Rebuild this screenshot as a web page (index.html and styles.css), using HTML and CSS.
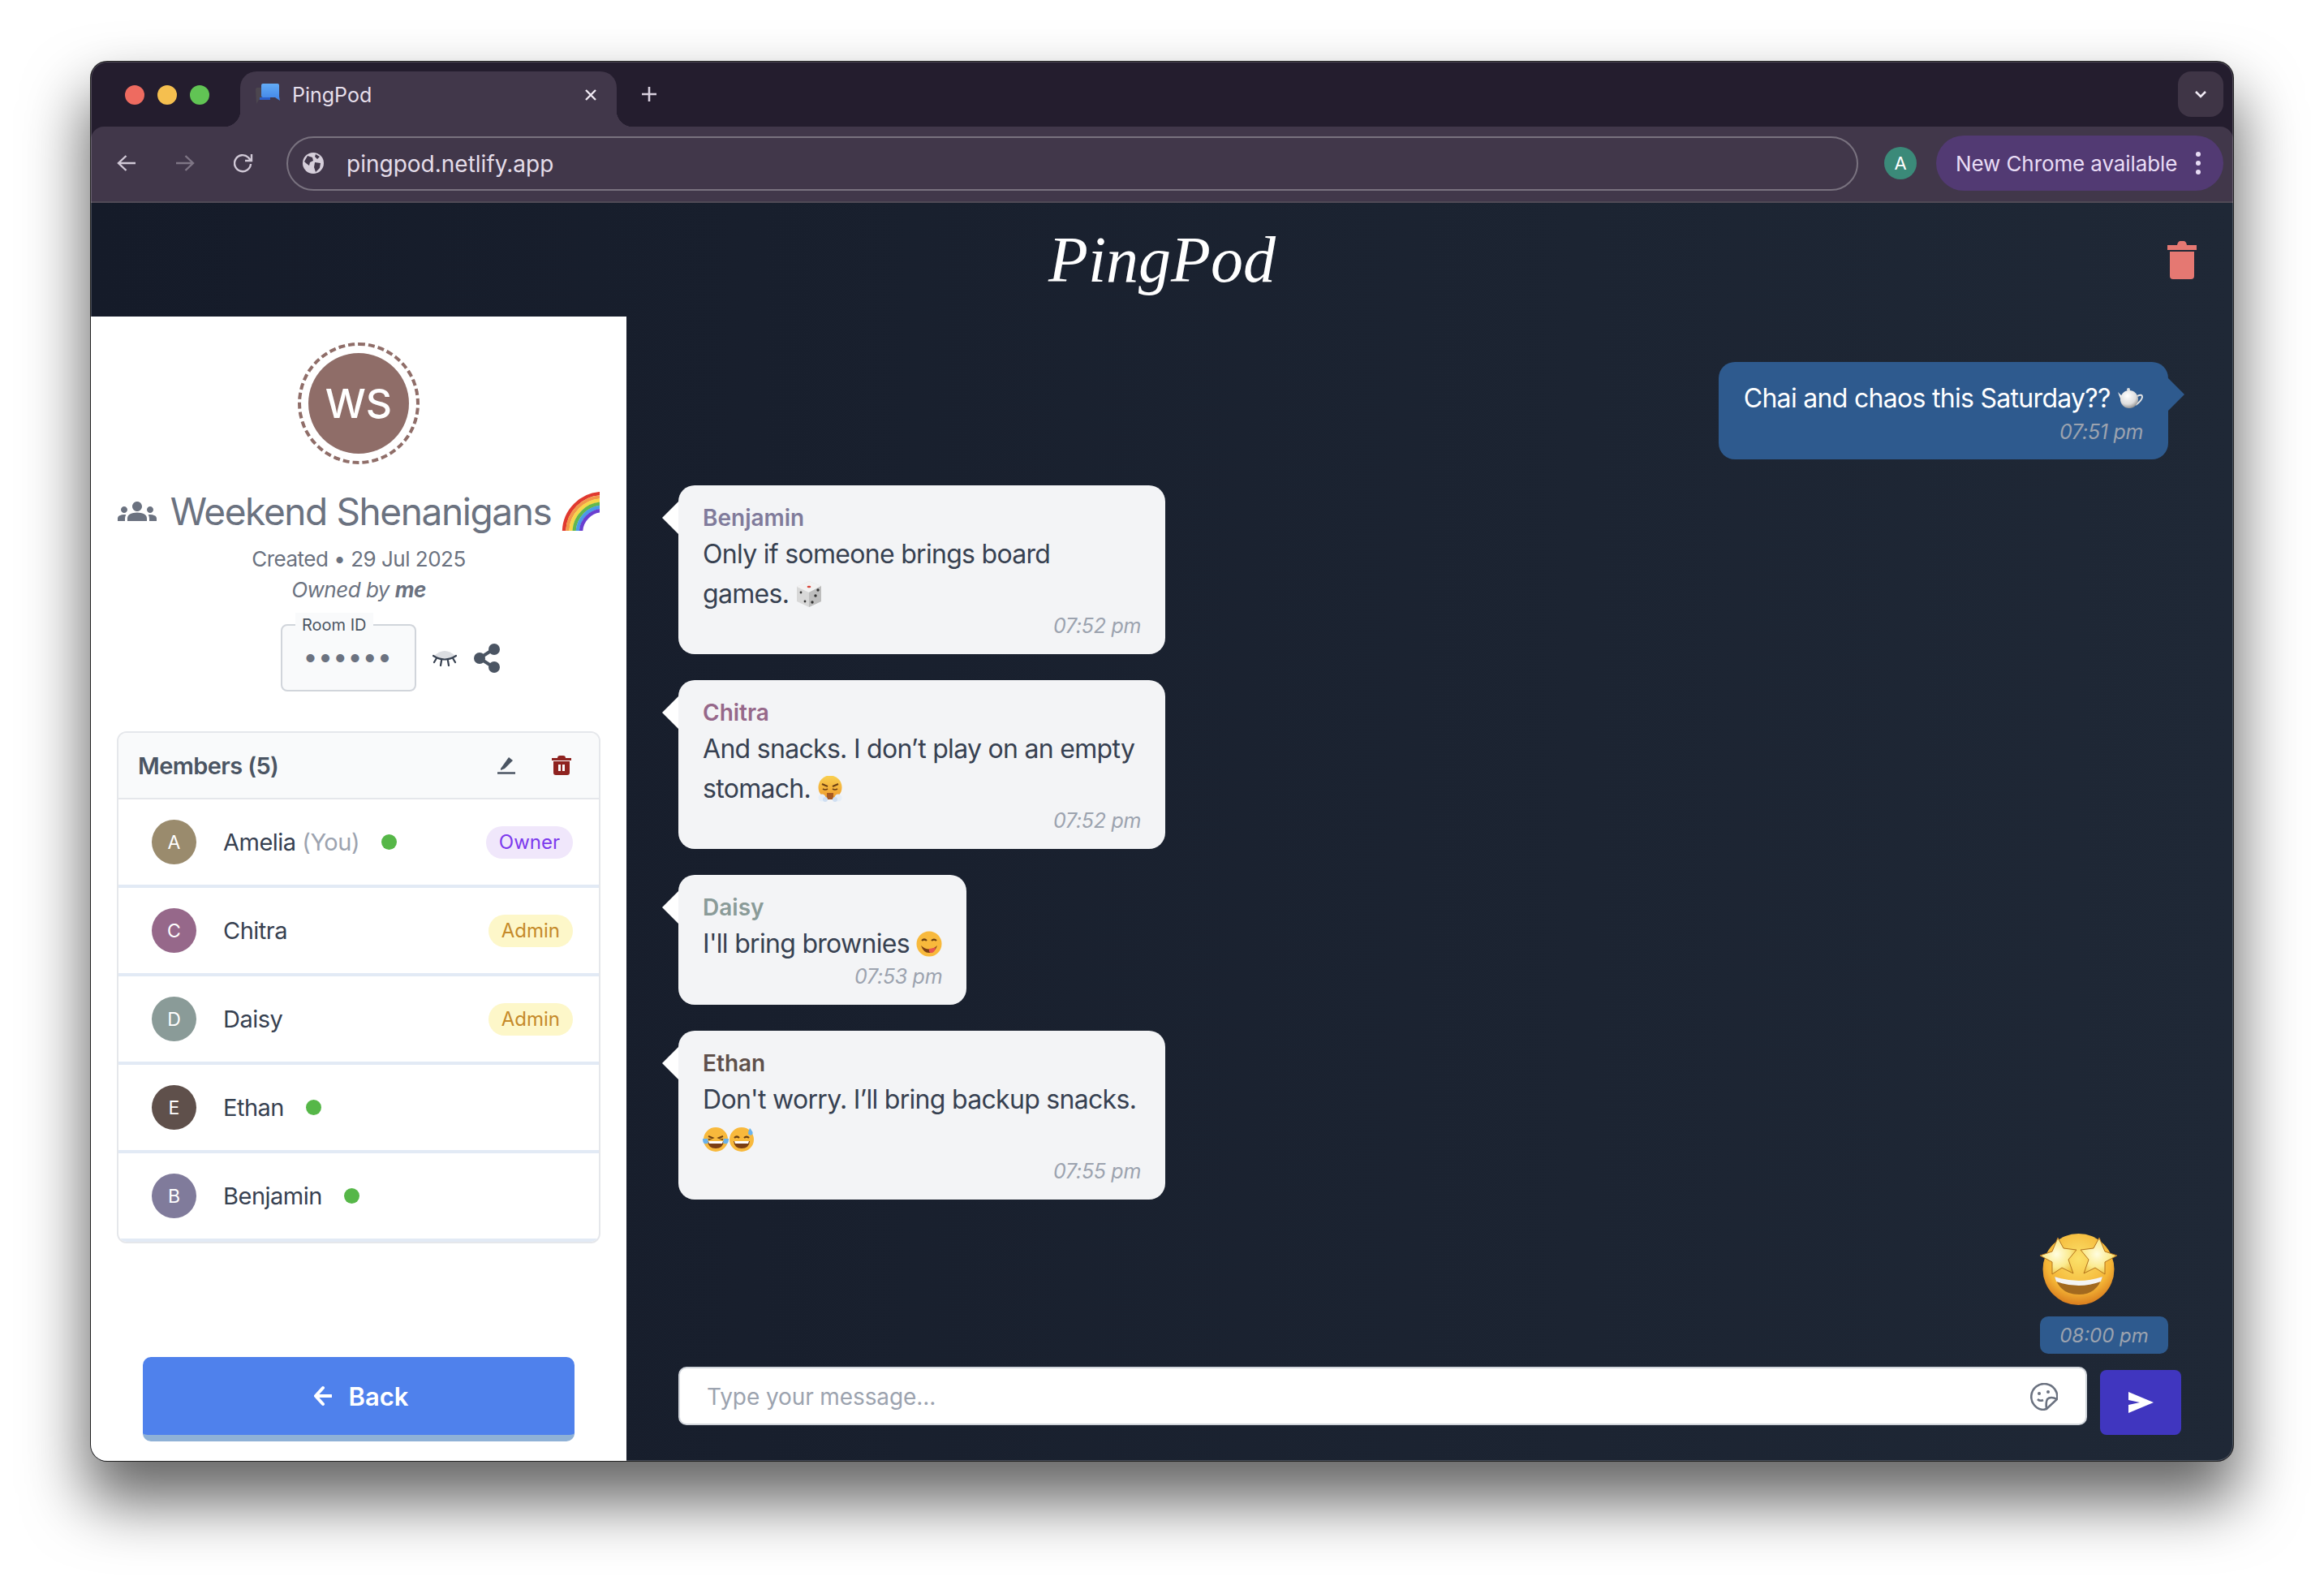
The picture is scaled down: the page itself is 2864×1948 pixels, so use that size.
FILE: index.html
```html
<!DOCTYPE html>
<html lang="en">
<head>
  <meta charset="UTF-8">
  <title>PingPod</title>
  <link rel="stylesheet" href="styles.css">
</head>
<body>
  <div class="window">
    <div class="tab-strip">
      <div class="lights">
        <span class="light red"></span>
        <span class="light yellow"></span>
        <span class="light green"></span>
      </div>
      <div class="tab">
        <svg class="favicon" viewBox="0 0 30 28">
          <defs><linearGradient id="fav" x1="0" y1="0" x2="0" y2="1"><stop offset="0" stop-color="#63acf6"/><stop offset="1" stop-color="#3f82e6"/></linearGradient></defs>
          <path d="M0 8q0-2 2-2h6v15H4l-3 5z" fill="#4c464f"/>
          <path d="M7 3q0-2 2-2h18q2 0 2 2v14l1 5-6-4H9q-2 0-2-2z" fill="url(#fav)"/>
          <path d="M5 18h13v3H5z" fill="#2b5fc9"/>
        </svg>
        <span class="tab-title">PingPod</span>
        <svg class="tab-close" viewBox="0 0 16 16"><path d="M2 2l12 12M14 2L2 14"/></svg>
      </div>
      <svg class="new-tab" viewBox="0 0 20 20"><path d="M10 1v18M1 10h18"/></svg>
      <div class="tab-menu">
        <svg viewBox="0 0 16 10"><path d="M2 2l6 6 6-6"/></svg>
      </div>
    </div>

    <div class="toolbar">
      <svg class="nav-icon" viewBox="0 0 24 24"><path d="M23 12H3M11.500 3L2 12l9.500 9"/></svg>
      <svg class="nav-icon dim" viewBox="0 0 24 24"><path d="M1 12h20M12.500 3L22 12l-9.500 9"/></svg>
      <svg class="nav-icon reload" viewBox="0 0 24 24"><path d="M21 13a10 10 0 1 1-3-8l3 3.500M22 1v8h-8"/></svg>
      <div class="address">
        <svg class="globe" viewBox="0 0 26 26">
          <circle cx="13" cy="13" r="13" fill="#d6cfdb"/>
          <path d="M6 4l6 2 1 4-4 2-1 4-4-3-2-2zM15 12l7 1-1 6-5 5-2-6zM16 2l5 3-3 3-3-3z" fill="#41374a"/>
        </svg>
        <span class="url">pingpod.netlify.app</span>
      </div>
      <span class="profile">A</span>
      <div class="update-pill">
        <span>New Chrome available</span>
        <span class="kebab"><i></i><i></i><i></i></span>
      </div>
    </div>

    <div class="app">
      <header class="app-header">
        <span></span>
        <span class="logo">PingPod</span>
        <svg class="header-trash" viewBox="0 0 36 47">
          <path d="M0 5h12q1-5 4-5h4q3 0 4 5h12v6H0z"/>
          <path d="M3 13h30v30q0 4-4 4H7q-4 0-4-4z"/>
        </svg>
      </header>

      <div class="app-body">
        <aside class="sidebar">
          <div class="room-avatar"><span>WS</span></div>
          <h1 class="room-title">
            <svg class="room-icon" viewBox="0 0 24 24"><path d="M12 12.750c1.630 0 3.070.390 4.240.900 1.080.480 1.760 1.560 1.760 2.730V18H6v-1.610c0-1.180.680-2.260 1.760-2.730 1.170-.520 2.610-.910 4.240-.910zM4 13c1.100 0 2-.900 2-2s-.900-2-2-2-2 .900-2 2 .900 2 2 2zm1.130 1.100c-.370-.060-.740-.100-1.130-.100-.990 0-1.930.210-2.780.580C.480 14.900 0 15.620 0 16.430V18h4.500v-1.610c0-.830.230-1.610.630-2.290zM20 13c1.100 0 2-.900 2-2s-.900-2-2-2-2 .900-2 2 .900 2 2 2zm4 3.430c0-.810-.480-1.530-1.220-1.850-.850-.370-1.790-.580-2.780-.580-.390 0-.760.040-1.130.100.400.680.630 1.460.630 2.290V18H24v-1.570zM12 6c1.660 0 3 1.340 3 3s-1.340 3-3 3-3-1.340-3-3 1.340-3 3-3z"/></svg>
            <span>Weekend Shenanigans</span>
            <svg class="rainbow" viewBox="0 0 48 48" fill="none" stroke-width="4.400">
              <circle cx="52" cy="50" r="48" stroke="#e0392f"/>
              <circle cx="52" cy="50" r="43.800" stroke="#f2994a"/>
              <circle cx="52" cy="50" r="39.600" stroke="#f7d64a"/>
              <circle cx="52" cy="50" r="35.400" stroke="#62b84e"/>
              <circle cx="52" cy="50" r="31.200" stroke="#4a9be8"/>
              <circle cx="52" cy="50" r="27" stroke="#6a3fd0"/>
            </svg>
          </h1>
          <p class="room-meta">Created • 29 Jul 2025</p>
          <p class="room-meta owner-line">Owned by <b>me</b></p>

          <div class="room-id-row">
            <div class="room-id">
              <span class="room-id-label">Room ID</span>
              <span class="room-id-dots">••••••</span>
            </div>
            <svg class="eye" viewBox="0 0 30 21">
              <path d="M2 8Q15-4 28 8 15 15 2 8z" fill="#dcdee2"/>
              <path d="M1 8q14 9 28 0M5 11l-3 5M11 14l-1 6M19 14l1 6M25 11l3 5" fill="none" stroke="#374151" stroke-width="2.200" stroke-linecap="round"/>
            </svg>
            <svg class="share" viewBox="0 0 32 36">
              <path d="M24 7L7 18l17 11" fill="none" stroke="#4b5563" stroke-width="4"/>
              <circle cx="25" cy="7" r="7" fill="#4b5563"/>
              <circle cx="7" cy="18" r="7" fill="#4b5563"/>
              <circle cx="25" cy="29" r="7" fill="#4b5563"/>
            </svg>
          </div>

          <section class="members">
            <div class="members-head">
              <span>Members (5)</span>
              <svg class="pen" viewBox="0 0 22 22">
                <path d="M4 15L14 1l5 4-10 10-5 2z" fill="#4b5563"/>
                <path d="M0 20.500h22" stroke="#4b5563" stroke-width="2.500"/>
              </svg>
              <svg class="bin" viewBox="0 0 24 24">
                <path d="M0 3h7q0-3 3-3h4q3 0 3 3h7v3H0z" fill="#8f2320"/>
                <path fill-rule="evenodd" d="M2 7h20v14q0 3-3 3H5q-3 0-3-3zM8 11v8h3v-8zM13 11v8h3v-8z" fill="#8f2320"/>
              </svg>
            </div>
            <div class="member">
              <span class="member-avatar amelia">A</span>
              <span class="member-name">Amelia <em>(You)</em></span>
              <span class="online"></span>
              <span class="role owner">Owner</span>
            </div>
            <div class="member">
              <span class="member-avatar chitra">C</span>
              <span class="member-name">Chitra</span>
              <span class="role admin">Admin</span>
            </div>
            <div class="member">
              <span class="member-avatar daisy">D</span>
              <span class="member-name">Daisy</span>
              <span class="role admin">Admin</span>
            </div>
            <div class="member">
              <span class="member-avatar ethan">E</span>
              <span class="member-name">Ethan</span>
              <span class="online"></span>
            </div>
            <div class="member">
              <span class="member-avatar benjamin">B</span>
              <span class="member-name">Benjamin</span>
              <span class="online"></span>
            </div>
          </section>

          <button class="back-btn">
            <svg viewBox="0 0 22 26"><path d="M21 13H3M11 3L2 13l9 10"/></svg>
            Back
          </button>
        </aside>

        <main class="chat">
          <div class="messages">
            <div class="bubble mine">
              <div class="msg-text">Chai and chaos this Saturday?? <svg class="emoji" viewBox="0 0 32 32">
                <defs><radialGradient id="pot" cx=".4" cy=".3" r=".8"><stop offset="0" stop-color="#fff"/><stop offset=".6" stop-color="#ddd"/><stop offset="1" stop-color="#777"/></radialGradient></defs>
                <path d="M25 13q6-3 6 1t-8 10" fill="none" stroke="#e4e4e4" stroke-width="2"/>
                <path d="M1 8l6 6-2 5z" fill="#eee"/>
                <circle cx="14" cy="5" r="2" fill="#ddd"/>
                <ellipse cx="15" cy="17" rx="11" ry="11" fill="url(#pot)"/>
              </svg></div>
              <div class="msg-time">07:51 pm</div>
            </div>

            <div class="bubble">
              <div class="msg-name" style="color: #807b9b">Benjamin</div>
              <div class="msg-text">Only if someone brings board games. <svg class="emoji" viewBox="0 0 32 32">
                <path d="M16 0l15 6v19l-15 7-15-7V7z" fill="#d8d8d8"/>
                <path d="M16 0l15 6-15 8L1 7z" fill="#f2f2f2"/>
                <path d="M16 14l15-8v19l-15 7z" fill="#bdbdbd"/>
                <ellipse cx="16" cy="7" rx="2.400" ry="1.300" fill="#d9453a"/>
                <g fill="#333"><circle cx="6" cy="14" r="1.400"/><circle cx="11" cy="25" r="1.400"/><circle cx="27" cy="11" r="1.700"/><circle cx="24" cy="18" r="1.700"/><circle cx="20" cy="26" r="1.700"/></g>
              </svg></div>
              <div class="msg-time">07:52 pm</div>
            </div>

            <div class="bubble">
              <div class="msg-name" style="color: #96688a">Chitra</div>
              <div class="msg-text">And snacks. I don’t play on an empty stomach. <svg class="emoji" viewBox="0 0 32 32">
                <defs><linearGradient id="huff" x1="0" y1="0" x2="0" y2="1"><stop offset="0" stop-color="#f9d050"/><stop offset="1" stop-color="#ee9a2c"/></linearGradient></defs>
                <circle cx="16" cy="14" r="14.500" fill="url(#huff)"/>
                <path d="M6 10l7 3M26 10l-7 3" stroke="#6b3f12" stroke-width="2"/>
                <path d="M7 16q3 2 6 0M19 16q3 2 6 0" fill="none" stroke="#6b3f12" stroke-width="1.600"/>
                <path d="M12 21h8v8h-8z" fill="#a85a22"/>
                <circle cx="6" cy="27" r="4.500" fill="#e6eef8"/><circle cx="10" cy="29" r="3" fill="#cfdff2"/>
                <circle cx="26" cy="27" r="4.500" fill="#e6eef8"/><circle cx="22" cy="29" r="3" fill="#cfdff2"/>
              </svg></div>
              <div class="msg-time">07:52 pm</div>
            </div>

            <div class="bubble">
              <div class="msg-name" style="color: #8a9b98">Daisy</div>
              <div class="msg-text tall-line">I'll bring brownies <svg class="emoji" viewBox="0 0 32 32">
                <circle cx="16" cy="16" r="15.500" fill="#f8b93c"/>
                <path d="M7 12q3-3 6 0M19 12q3-3 6 0" fill="none" stroke="#6b3f12" stroke-width="2.200"/>
                <path d="M6 18q10 9 20 0-3 9-10 9T6 18z" fill="#7a3e14"/>
                <path d="M16 22q7-1 8-2-1 7-5 7t-3-5z" fill="#e8544f"/>
              </svg></div>
              <div class="msg-time">07:53 pm</div>
            </div>

            <div class="bubble">
              <div class="msg-name" style="color: #5f504b">Ethan</div>
              <div class="msg-text">Don't worry. I’ll bring backup snacks. <svg class="emoji" viewBox="0 0 32 32">
                <circle cx="16" cy="16" r="15" fill="#f8b93c"/>
                <path d="M7 12l5 2-5 2M25 12l-5 2 5 2" fill="none" stroke="#6b3f12" stroke-width="2"/>
                <path d="M6 18h20q-1 9-10 9T6 18z" fill="#7a3e14"/>
                <path d="M7 18h18l-1 3H8z" fill="#fff"/>
                <path d="M0 15h6l1 5q-2 2-5 1-2-1-2-6zM32 15h-6l-1 5q2 2 5 1 2-1 2-6z" fill="#6ab2ea"/>
              </svg><svg class="emoji" viewBox="0 0 32 32">
                <circle cx="16" cy="16" r="15" fill="#f8b93c"/>
                <path d="M7 14q3-3 6 0M19 14q3-3 6 0" fill="none" stroke="#6b3f12" stroke-width="2.200"/>
                <path d="M6 18h20q-1 9-10 9T6 18z" fill="#7a3e14"/>
                <path d="M7 18h18l-1 3H8z" fill="#fff"/>
                <path d="M26 2q5 5 3 8-3 2-5-1 0-3 2-7z" fill="#6ab2ea"/>
              </svg></div>
              <div class="msg-time">07:55 pm</div>
            </div>

            <div class="sticker-msg">
              <svg class="sticker" viewBox="0 0 95 88">
                <defs>
                  <radialGradient id="face" cx=".5" cy=".35" r=".65"><stop offset="0" stop-color="#fbe16a"/><stop offset=".7" stop-color="#f5b636"/><stop offset="1" stop-color="#d97d1e"/></radialGradient>
                  <radialGradient id="star" cx=".45" cy=".45" r=".6"><stop offset="0" stop-color="#fffde0"/><stop offset=".6" stop-color="#fbeb90"/><stop offset="1" stop-color="#eebf3a"/></radialGradient>
                </defs>
                <circle cx="47.500" cy="44" r="44" fill="url(#face)"/>
                <path d="M18 53Q48 66 77 53 70 75 48 75 25 75 18 53z" fill="#a2691f"/>
                <path d="M18 53Q48 63 77 53L75 59Q48 69 20 59z" fill="#f4f4f4"/>
                <path d="M22 5l7 13 16 2-10 12 6 17-14-7-12 8 0-15L0 27l15-5z" fill="url(#star)" stroke="#b4741f"/>
                <path d="M73 5l-7 13-16 2 10 12-6 17 14-7 12 8 0-15 15-8-15-5z" fill="url(#star)" stroke="#b4741f"/>
              </svg>
              <div class="sticker-time">08:00 pm</div>
            </div>
          </div>

          <div class="composer">
            <div class="msg-input">
              <span class="placeholder">Type your message...</span>
              <svg class="sticker-btn" viewBox="0 0 34 34" fill="none" stroke="#6b7280" stroke-width="2.600">
                <path d="M33 20A16 16 0 1 0 16 33l4-1 13-12z"/>
                <path d="M9 20q3 3 7 1M33 20q-8-4-12 0-2 4-1 12"/>
                <circle cx="11" cy="13" r="2" fill="#6b7280" stroke="none"/>
                <circle cx="22" cy="11" r="2" fill="#6b7280" stroke="none"/>
              </svg>
            </div>
            <button class="send-btn">
              <svg viewBox="0 0 31 26"><path d="M0 0l31 13L0 26V16l14-3L0 10z"/></svg>
            </button>
          </div>
        </main>
      </div>
    </div>
  </div>
</body>
</html>
```

FILE: styles.css
```css
* {
  box-sizing: border-box;
}

html,
body {
  margin: 0;
  background: #fff;
}

body {
  width: 2864px;
  height: 1948px;
  padding: 76px 112px 148px;
  overflow: hidden;
  font-family: Inter, "Noto Sans", sans-serif;
}

p,
h1 {
  margin: 0;
}

.window {
  position: relative;
  height: 100%;
  display: flex;
  flex-direction: column;
  background: #241d2e;
  border-radius: 20px;
  box-shadow: 0 0 0 1px #222, 0 45px 76px 6px rgba(0, 0, 0, 0.6);
  overflow: hidden;
}

/* thin light edge that only shows against the dark parts */
.window::after {
  content: "";
  position: absolute;
  inset: 0;
  border-radius: 20px;
  box-shadow: inset 0 0 0 1px rgba(255, 255, 255, 0.2);
  pointer-events: none;
}

/* browser chrome */
.tab-strip {
  height: 80px;
  flex: none;
  display: flex;
  align-items: flex-start;
  padding-top: 12px;
}

.lights {
  width: 184px;
  flex: none;
  display: flex;
  gap: 16px;
  padding: 17px 0 0 42px;
}

.light {
  width: 24px;
  height: 24px;
  border-radius: 50%;
}

.light.red { background: #ee6b60; }
.light.yellow { background: #f5bf4f; }
.light.green { background: #61c454; }

.tab {
  position: relative;
  width: 464px;
  height: 68px;
  flex: none;
  display: flex;
  align-items: flex-start;
  padding: 14px 24px 0 19px;
  background: #41374a;
  border-radius: 20px 20px 0 0;
}

.tab::before,
.tab::after {
  content: "";
  position: absolute;
  bottom: 0;
  width: 20px;
  height: 20px;
}

.tab::before {
  left: -20px;
  background: radial-gradient(circle at 0 0, transparent 20px, #41374a 20.5px);
}

.tab::after {
  right: -20px;
  background: radial-gradient(circle at 100% 0, transparent 20px, #41374a 20.5px);
}

.favicon {
  width: 30px;
  height: 28px;
  flex: none;
}

.tab-title {
  margin: 1px 0 0 15px;
  flex: 1;
  font-size: 25px;
  line-height: 28px;
  color: #e6dfeb;
}

.tab-close {
  width: 16px;
  height: 16px;
  margin-top: 7px;
  fill: none;
  stroke: #efe9f3;
  stroke-width: 2.400;
}

.new-tab {
  width: 20px;
  height: 20px;
  margin: 18px 0 0 30px;
  fill: none;
  stroke: #d9d1df;
  stroke-width: 2.600;
}

.tab-menu {
  width: 56px;
  height: 56px;
  margin-left: auto;
  margin-right: 12px;
  display: flex;
  align-items: center;
  justify-content: center;
  background: #3f3546;
  border-radius: 16px;
}

.tab-menu svg {
  width: 16px;
  height: 10px;
  fill: none;
  stroke: #f0eaf4;
  stroke-width: 2.600;
}

.toolbar {
  height: 94px;
  flex: none;
  display: flex;
  align-items: center;
  padding: 0 12px 2px 32px;
  background: #41374a;
  border-bottom: 2px solid #504a56;
  border-radius: 16px 16px 0 0;
}

.nav-icon {
  width: 24px;
  height: 24px;
  margin-right: 48px;
  flex: none;
  fill: none;
  stroke: #d0c8d6;
  stroke-width: 2.400;
}

.nav-icon.dim {
  stroke: #7e7585;
}

.nav-icon.reload {
  margin-right: 41px;
}

.address {
  width: 1937px;
  height: 67px;
  flex: none;
  display: flex;
  align-items: center;
  padding-left: 18px;
  border: 2px solid #79727f;
  border-radius: 34px;
}

.globe {
  width: 26px;
  height: 26px;
}

.url {
  margin: 1px 0 0 28px;
  font-size: 28px;
  color: #e4dde9;
}

.profile {
  width: 40px;
  height: 40px;
  margin-left: 32px;
  flex: none;
  display: flex;
  align-items: center;
  justify-content: center;
  border-radius: 50%;
  background: #3b8a79;
  color: #fff;
  font-size: 22px;
}

.update-pill {
  width: 354px;
  height: 68px;
  margin-left: 24px;
  flex: none;
  display: flex;
  align-items: center;
  padding: 0 28px 0 24px;
  background: #523a73;
  border-radius: 34px;
  color: #e8dcf5;
  font-size: 26px;
  letter-spacing: -0.100px;
}

.kebab {
  margin-left: auto;
  display: flex;
  flex-direction: column;
  gap: 5px;
}

.kebab i {
  width: 6px;
  height: 6px;
  border-radius: 50%;
  background: #e8dcf5;
}

/* app */
.app {
  flex: 1;
  display: flex;
  flex-direction: column;
  min-height: 0;
  background: linear-gradient(90deg, #151b29, #1f2836);
}

.app-header {
  height: 140px;
  flex: none;
  display: grid;
  grid-template-columns: 1fr auto 1fr;
  align-items: center;
  padding: 0 45px;
}

.logo {
  font-family: "Liberation Serif", serif;
  font-style: italic;
  font-size: 80px;
  line-height: 1;
  color: #fff;
}

.header-trash {
  width: 36px;
  height: 47px;
  justify-self: end;
  fill: #e57872;
}

.app-body {
  flex: 1;
  display: flex;
  min-height: 0;
}

/* sidebar */
.sidebar {
  width: 660px;
  flex: none;
  display: flex;
  flex-direction: column;
  align-items: center;
  padding: 32px 32px 24px;
  background: #fff;
}

.room-avatar {
  width: 150px;
  height: 150px;
  flex: none;
  padding: 9px;
  border: 4px dashed #8f6d68;
  border-radius: 50%;
}

.room-avatar span {
  width: 100%;
  height: 100%;
  display: flex;
  align-items: center;
  justify-content: center;
  border-radius: 50%;
  background: #8f6d68;
  color: #fff;
  font-size: 50px;
  font-weight: 500;
}

.room-title {
  height: 60px;
  margin-top: 28px;
  display: flex;
  align-items: center;
  font-size: 46px;
  font-weight: 400;
  letter-spacing: -1.400px;
  color: #6b7280;
  white-space: nowrap;
}

.room-icon {
  width: 48px;
  height: 48px;
  margin-right: 17px;
  fill: #6b7280;
}

.rainbow {
  width: 48px;
  height: 48px;
  margin-left: 12px;
}

.room-meta {
  font-size: 26px;
  letter-spacing: -0.500px;
  line-height: 38px;
  color: #6b7280;
}

.room-title + .room-meta {
  margin-top: 10px;
}

.owner-line {
  font-style: italic;
}

.room-id-row {
  margin-top: 23px;
  padding-left: 78px;
  display: flex;
  align-items: center;
}

.room-id {
  position: relative;
  width: 167px;
  height: 83px;
  display: flex;
  align-items: center;
  justify-content: center;
  background: #f9fafb;
  border: 2px solid #d1d5db;
  border-radius: 8px;
}

.room-id-label {
  position: absolute;
  top: -16px;
  left: 16px;
  padding: 0 8px;
  background: #f9fafb;
  font-size: 20px;
  line-height: 30px;
  color: #4b5563;
}

.room-id-dots {
  margin: -3px 0 0 -2px;
  font-size: 32px;
  line-height: 1;
  letter-spacing: 0.300px;
  color: #6b7280;
}

.eye {
  width: 30px;
  height: 21px;
  margin-left: 20px;
}

.share {
  width: 32px;
  height: 36px;
  margin-left: 21px;
}

.members {
  width: 596px;
  margin-top: 49px;
  flex: none;
  border: 2px solid #e5e7eb;
  border-radius: 12px;
  overflow: hidden;
}

.members-head {
  height: 82px;
  display: flex;
  align-items: center;
  padding: 0 34px 0 24px;
  background: #f9fafb;
  border-bottom: 2px solid #e5e7eb;
  font-size: 29px;
  font-weight: 600;
  letter-spacing: -0.600px;
  color: #4b5563;
}

.pen {
  width: 22px;
  height: 22px;
  margin-left: auto;
}

.bin {
  width: 24px;
  height: 24px;
  margin-left: 45px;
}

.member {
  height: 109px;
  display: flex;
  align-items: center;
  padding: 0 32px 0 41px;
  border-bottom: 4px solid #e2eaf5;
}

.member-avatar {
  width: 55px;
  height: 55px;
  flex: none;
  display: flex;
  align-items: center;
  justify-content: center;
  border-radius: 50%;
  color: #fff;
  font-size: 23px;
}

.amelia { background: #9a8b6d; }
.chitra { background: #96688a; }
.daisy { background: #8a9b98; }
.ethan { background: #5f504b; }
.benjamin { background: #807b9b; }

.member-name {
  margin-left: 33px;
  font-size: 29px;
  letter-spacing: -0.500px;
  color: #374151;
}

.member-name em {
  font-style: normal;
  color: #9ca3af;
}

.online {
  width: 19px;
  height: 19px;
  margin-left: 27px;
  border-radius: 50%;
  background: #56b748;
}

.role {
  height: 40px;
  margin-left: auto;
  display: flex;
  align-items: center;
  padding: 0 16px;
  border-radius: 20px;
  font-size: 24px;
}

.role.owner {
  background: #f0e7fb;
  color: #7c3aed;
}

.role.admin {
  background: #fdf7c9;
  color: #c58a2a;
}

.back-btn {
  width: 532px;
  height: 104px;
  margin-top: auto;
  flex: none;
  display: flex;
  align-items: center;
  justify-content: center;
  gap: 21px;
  padding-left: 12px;
  background: #4f81ec;
  border: 0;
  border-bottom: 8px solid #8fb1d6;
  border-radius: 10px;
  color: #fff;
  font-family: inherit;
  font-size: 31px;
  font-weight: 600;
}

.back-btn svg {
  width: 22px;
  height: 26px;
  fill: none;
  stroke: #fff;
  stroke-width: 4;
  stroke-linecap: round;
}

/* chat */
.chat {
  flex: 1;
  display: flex;
  flex-direction: column;
  min-width: 0;
}

.messages {
  flex: 1;
  min-height: 0;
  display: flex;
  flex-direction: column;
  align-items: flex-start;
  gap: 32px;
  padding: 56px 80px 0 64px;
  overflow: hidden;
}

.bubble {
  position: relative;
  max-width: 600px;
  flex: none;
  padding: 23px 30px 19px;
  background: #f3f4f6;
  border-radius: 20px;
  color: #374151;
}

.bubble::before {
  content: "";
  position: absolute;
  top: 20px;
  left: -20px;
  width: 20px;
  height: 40px;
  background: #fff;
  clip-path: polygon(100% 0, 0 50%, 100% 100%);
}

.bubble.mine {
  align-self: flex-end;
  padding: 20px 31px 18px;
  background: #2e5a8e;
  color: #fff;
}

.bubble.mine::before {
  left: auto;
  right: -20px;
  background: #2e5a8e;
  clip-path: polygon(0 0, 100% 50%, 0 100%);
}

.msg-name {
  font-size: 28px;
  font-weight: 600;
  line-height: 34px;
}

.msg-text {
  margin-top: 3px;
  font-size: 32px;
  letter-spacing: -0.700px;
  line-height: 49px;
}

.mine .msg-text {
  margin-top: 0;
}

.tall-line {
  padding-bottom: 1px;
}

.emoji {
  width: 32px;
  height: 32px;
  vertical-align: -5px;
}

.msg-time {
  margin-top: -1px;
  font-size: 25px;
  font-style: italic;
  letter-spacing: -0.300px;
  line-height: 32px;
  text-align: right;
  color: #9ca3af;
}

.mine .msg-time {
  margin-top: 1px;
}

.sticker-msg {
  width: 158px;
  margin-top: 10px;
  align-self: flex-end;
}

.sticker {
  width: 95px;
  height: 88px;
  display: block;
}

.sticker-time {
  height: 46px;
  margin-top: 14px;
  display: flex;
  align-items: center;
  justify-content: center;
  background: #2e5a8e;
  border-radius: 10px;
  font-size: 24px;
  font-style: italic;
  color: #9ca3af;
}

.composer {
  flex: none;
  display: flex;
  align-items: flex-start;
  gap: 16px;
  padding: 16px 64px 32px;
}

.msg-input {
  flex: 1;
  height: 72px;
  display: flex;
  align-items: center;
  padding: 2px 34px 0 33px;
  background: #fff;
  border: 2px solid #d1d5db;
  border-radius: 10px;
}

.placeholder {
  flex: 1;
  font-size: 28px;
  letter-spacing: -0.100px;
  color: #9ca3af;
}

.sticker-btn {
  width: 34px;
  height: 34px;
}

.send-btn {
  width: 100px;
  height: 80px;
  margin-top: 4px;
  flex: none;
  display: flex;
  align-items: center;
  justify-content: center;
  background: #4036bf;
  border: 0;
  border-radius: 8px;
}

.send-btn svg {
  width: 31px;
  height: 26px;
  fill: #fff;
}
```
